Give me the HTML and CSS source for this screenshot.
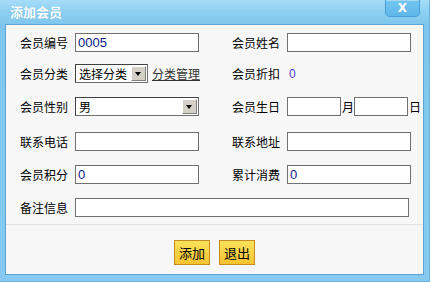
FILE: index.html
```html
<!DOCTYPE html>
<html lang="zh-CN">
<head>
  <meta charset="UTF-8">
  <title>添加会员</title>
  <link rel="stylesheet" href="styles.css">
</head>
<body>
  <div class="dialog">
    <div class="titlebar">
      <span class="title">添加会员</span>
      <button class="close-btn">X</button>
    </div>

    <div class="panel">
      <div class="form-grid">
        <label>会员编号</label>
        <div class="field"><input class="txt" type="text" value="0005"></div>
        <span></span>
        <label>会员姓名</label>
        <div class="field"><input class="txt" type="text"></div>

        <label>会员分类</label>
        <div class="field">
          <div class="combo combo-small"><span class="combo-text">选择分类</span><span class="combo-arrow"></span></div>
          <a class="link" href="#">分类管理</a>
        </div>
        <span></span>
        <label>会员折扣</label>
        <div class="field"><span class="discount">0</span></div>

        <label>会员性别</label>
        <div class="field">
          <div class="combo combo-full"><span class="combo-text">男</span><span class="combo-arrow"></span></div>
        </div>
        <span></span>
        <label>会员生日</label>
        <div class="field">
          <input class="txt txt-date" type="text"><span class="unit">月</span><input class="txt txt-date" type="text"><span class="unit">日</span>
        </div>

        <label>联系电话</label>
        <div class="field"><input class="txt" type="text"></div>
        <span></span>
        <label>联系地址</label>
        <div class="field"><input class="txt" type="text"></div>

        <label>会员积分</label>
        <div class="field"><input class="txt" type="text" value="0"></div>
        <span></span>
        <label>累计消费</label>
        <div class="field"><input class="txt" type="text" value="0"></div>

        <label>备注信息</label>
        <div class="field field-wide"><input class="txt txt-wide" type="text"></div>
      </div>

      <div class="actions">
        <button class="btn">添加</button>
        <button class="btn">退出</button>
      </div>
    </div>
  </div>
</body>
</html>
```

FILE: styles.css
```css
body {
  margin: 0;
  padding: 0;
  font-family: "Noto Sans CJK SC", "DejaVu Sans", sans-serif;
  font-size: 12px;
  color: #000;
  background-color: #fff;
}

.dialog {
  width: 430px;
  height: 282px;
  box-sizing: border-box;
  background: linear-gradient(to bottom, #a6ddf8 0px, #8ccff2 12px, #7fc6ee 25px, #86cbef 100%);
  border-right: 1px solid #6bb2e2;
  border-bottom: 1px solid #6bb2e2;
  padding: 0 5px 0 5px;
  display: flex;
  flex-direction: column;
}

.titlebar {
  height: 24px;
  display: flex;
  align-items: flex-start;
  justify-content: space-between;
}

.title {
  color: #fff;
  font-weight: bold;
  font-size: 13px;
  line-height: 24px;
  padding-left: 5px;
  text-shadow: 0 0 1px #6aaed8;
}

.close-btn {
  width: 35px;
  height: 17px;
  margin-right: 4px;
  padding: 0;
  border: 1px solid #4a9fd6;
  border-top: none;
  border-radius: 0 0 5px 5px;
  background: linear-gradient(to bottom, #74c6ef, #5eb8e8);
  color: #fff;
  font-family: "DejaVu Sans", sans-serif;
  font-weight: bold;
  font-size: 12px;
  line-height: 15px;
  box-shadow: inset 0 1px 0 rgba(255, 255, 255, 0.35);
}

.panel {
  height: 251px;
  box-sizing: border-box;
  border: 1px solid #5ba4d8;
  background-color: #f7f7f7;
  padding: 8px 0 0 14px;
}

.form-grid {
  display: grid;
  grid-template-columns: 55px 124px 33px 55px 124px;
  grid-template-rows: 31px 33px 35px 33px 33px 19px;
  align-items: start;
}

.form-grid label {
  height: 19px;
  line-height: 19px;
  font-size: 12px;
}

.field {
  height: 19px;
  display: flex;
  align-items: center;
  white-space: nowrap;
}

.field-wide {
  grid-column: 2 / span 4;
}

.txt {
  width: 124px;
  height: 19px;
  box-sizing: border-box;
  margin: 0;
  padding: 0 2px;
  border: 1px solid #707070;
  background-color: #fff;
  color: #0a1a8a;
  font-family: "Liberation Sans", Arial, sans-serif;
  font-size: 13px;
  outline: none;
}

.txt-wide {
  width: 334px;
}

.txt-date {
  width: 54px;
}

.unit {
  width: 12px;
  padding-left: 1px;
  font-size: 12px;
}

.combo {
  height: 19px;
  box-sizing: border-box;
  flex-shrink: 0;
  border: 1px solid #707070;
  border-top-color: #404040;
  border-left-color: #404040;
  background-color: #fff;
  display: flex;
  align-items: stretch;
}

.combo-small {
  width: 73px;
}

.combo-full {
  width: 124px;
}

.combo-text {
  flex: 1;
  line-height: 17px;
  padding-left: 3px;
  font-size: 12px;
}

.combo-arrow {
  width: 15px;
  margin: 1px;
  box-sizing: border-box;
  background-color: #d4d0c8;
  border: 1px solid;
  border-color: #fff #808080 #808080 #fff;
  position: relative;
}

.combo-arrow::after {
  content: "";
  position: absolute;
  left: 3px;
  top: 5px;
  border-left: 3.5px solid transparent;
  border-right: 3.5px solid transparent;
  border-top: 4px solid #000;
}

.link {
  flex-shrink: 0;
  margin-left: 4px;
  color: #333;
  font-size: 12px;
  text-decoration: underline;
}

.discount {
  padding-left: 2px;
  color: #4a3bd0;
  font-family: "Liberation Sans", Arial, sans-serif;
  font-size: 12px;
}

.actions {
  margin: 7px 0 0 -14px;
  border-top: 1px solid #e2e2e2;
  padding-top: 15px;
  display: flex;
  justify-content: center;
  gap: 9px;
}

.btn {
  width: 36px;
  height: 25px;
  padding: 0;
  border: 1px solid #c58a22;
  background: linear-gradient(to bottom, #fbe25a, #f5c331);
  color: #000;
  font-family: "Noto Sans CJK SC", sans-serif;
  font-size: 13px;
  line-height: 22px;
}
```
